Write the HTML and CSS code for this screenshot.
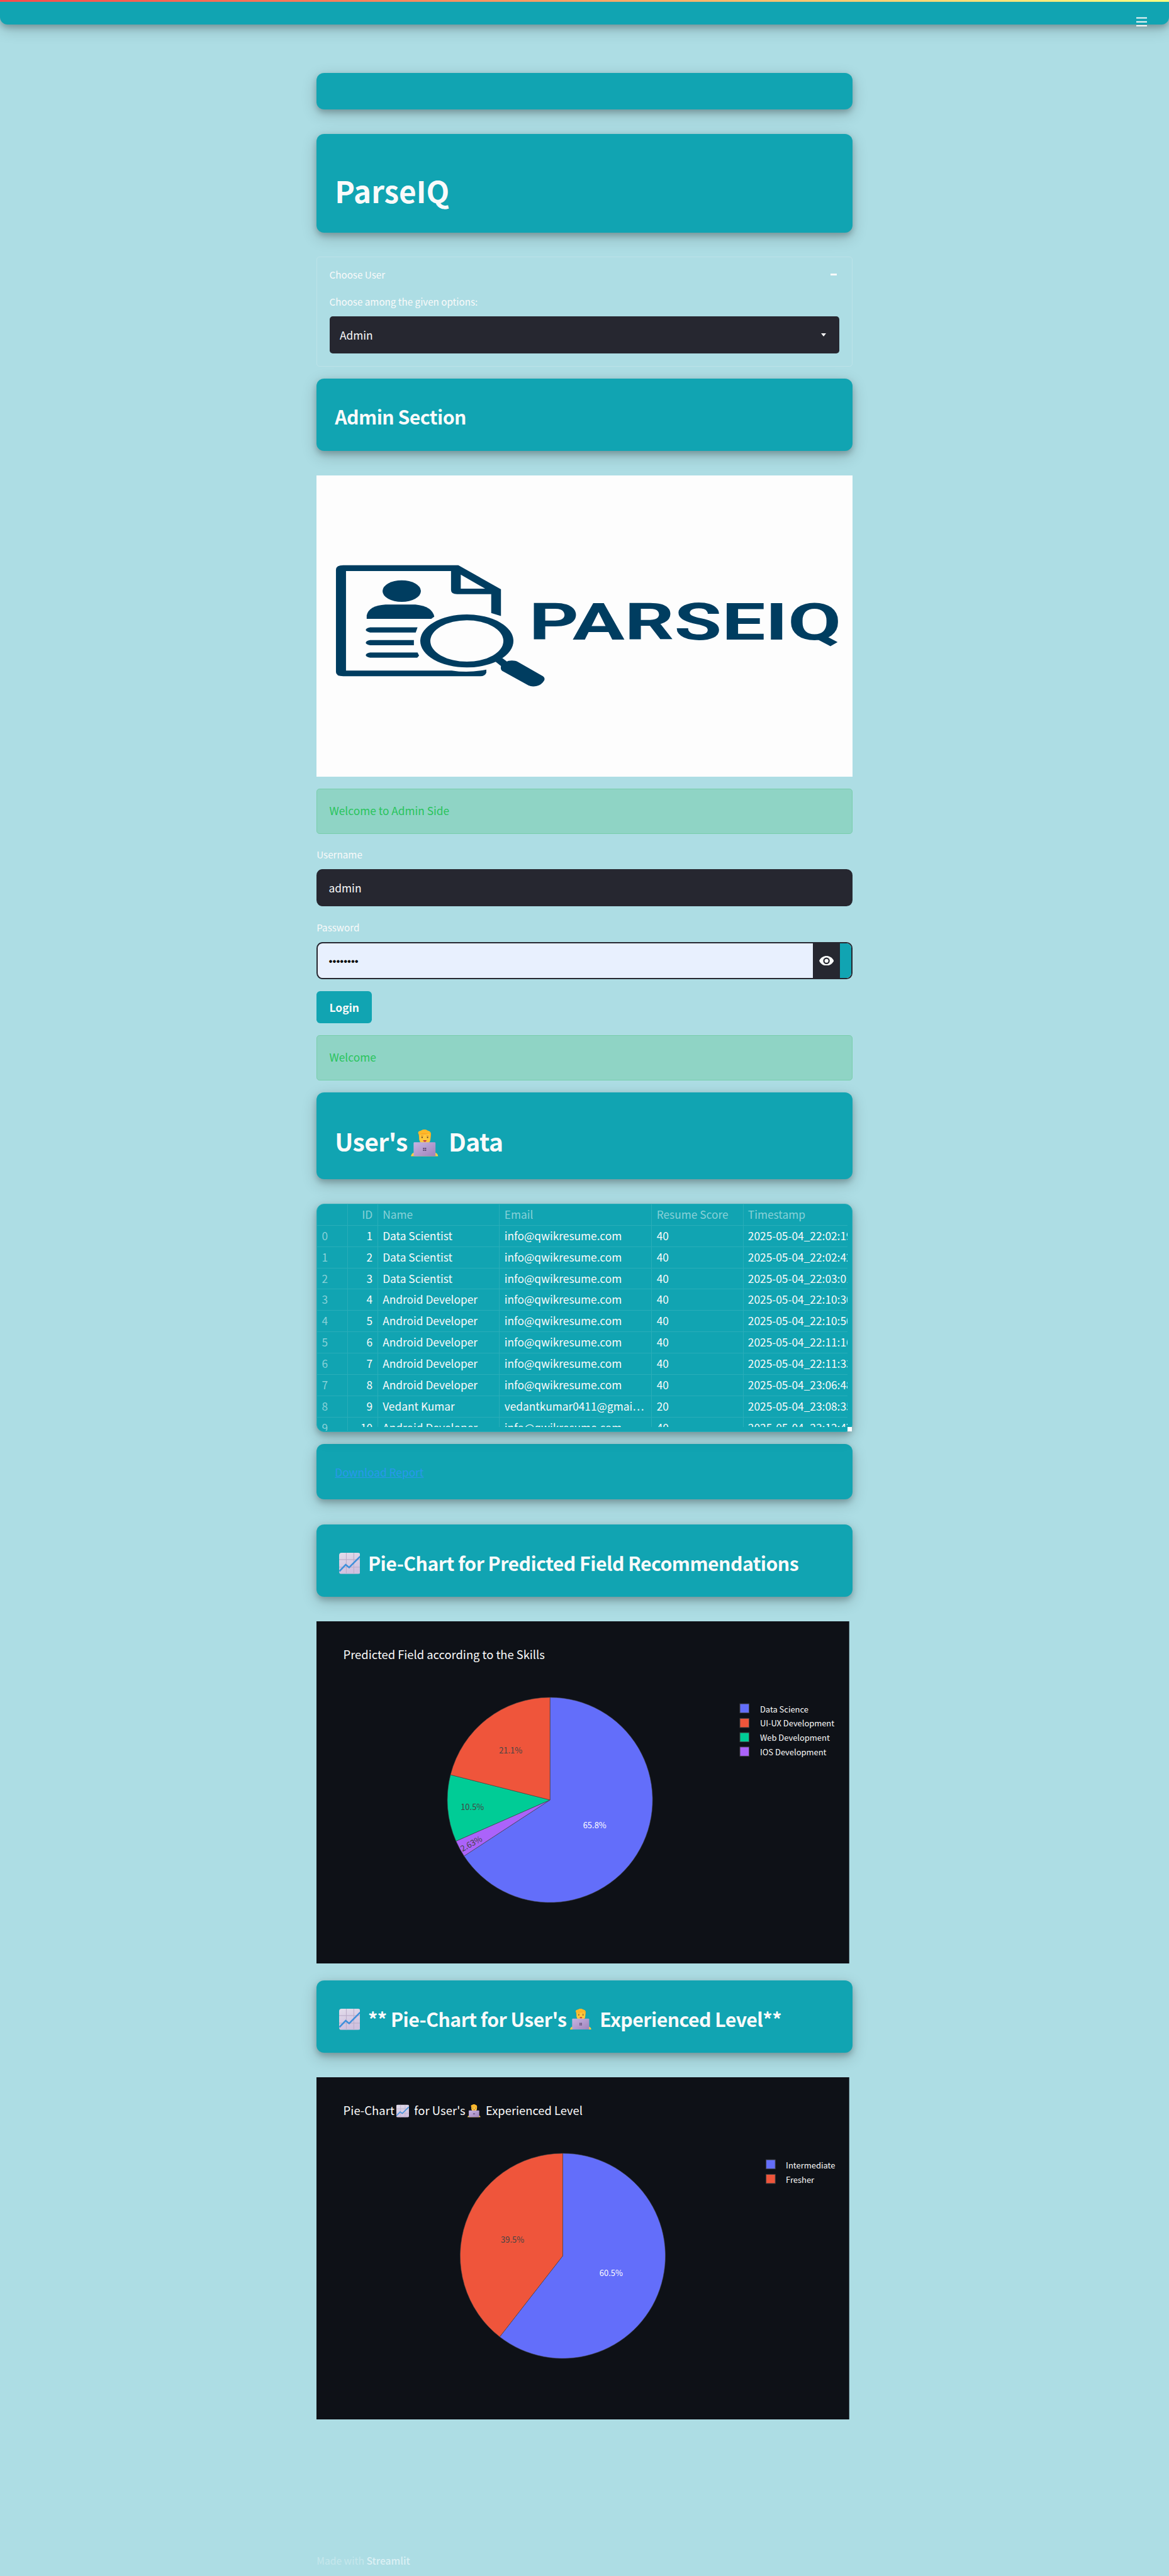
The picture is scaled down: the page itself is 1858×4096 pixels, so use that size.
FILE: index.html
```html
<!DOCTYPE html>
<html lang="en">
<head>
<meta charset="utf-8">
<title>ParseIQ</title>
<link rel="stylesheet" href="styles.css">
</head>
<body>
<svg class="defs" width="0" height="0">
  <defs>
    <linearGradient id="paper" x1="0" y1="0" x2="0.3" y2="1"><stop offset="0" stop-color="#e2dcea"/><stop offset="1" stop-color="#cfc0df"/></linearGradient>
    <linearGradient id="lid" x1="0" y1="0" x2="1" y2="1"><stop offset="0" stop-color="#c6b4e2"/><stop offset="1" stop-color="#a083bb"/></linearGradient>
    <symbol id="chart-up" viewBox="0 0 34 34">
      <rect width="34" height="34" rx="4" fill="url(#paper)"/>
      <path d="M11.500 0v34M23.500 0v34M0 11h34M0 23h34" stroke="#bdb0cb" stroke-width="1.200"/>
      <path d="M.5 29.500 10.500 19l5.500 4.500L33.500 6" fill="none" stroke="#3d8fdb" stroke-width="2.500"/>
    </symbol>
    <symbol id="technologist" viewBox="0 0 45 45">
      <path d="M0 44q1-5 5-6h35q4 1 5 6z" fill="#ffcf3f"/>
      <path d="M13 8Q11 3 17 2q6-4 11 0 6 1 5 8l-1 8H14z" fill="#f9a825"/>
      <path d="M14 8q8 1 17-1 1 3 1 9 0 8-9.500 8-8 0-8.500-8z" fill="#ffc83d"/>
      <path d="M13 8Q10 3 16 2q6-4 12 0 6 1 4 7-4-3-9-3-6 0-10 2z" fill="#fdb92a"/>
      <path d="M16.500 10.500h4M25.500 10.500h4" stroke="#d98b1f" stroke-width="1"/>
      <circle cx="18.500" cy="13" r="1.200" fill="#5b3a2e"/><circle cx="27.500" cy="13" r="1.200" fill="#5b3a2e"/>
      <path d="M20 17.500h6q-1 3-3 3t-3-3z" fill="#c43a4b"/>
      <rect x="4.500" y="21" width="36" height="23" rx="1.500" fill="url(#lid)"/>
      <path d="M20 30h2.200v2.200H20zm3 0h2.200v2.200H23zm-3 3h2.200v2.200H20zm3 0h2.200v2.200H23z" fill="#5c4a74"/>
    </symbol>
  </defs>
</svg>

<header class="topbar">
  <svg class="menu" viewBox="0 0 18 16"><path d="M0 1.500h18M0 8h18M0 14.500h18" stroke="#fafafa" stroke-width="2"/></svg>
</header>

<main class="column">
  <div class="card blank"></div>
  <div class="card brand"><h1>ParseIQ</h1></div>

  <section class="expander">
    <div class="summary"><span>Choose User</span><i class="minus"></i></div>
    <label class="label">Choose among the given options:</label>
    <div class="select"><span>Admin</span><i class="caret"></i></div>
  </section>

  <div class="card section"><h3>Admin Section</h3></div>

  <svg class="logo" viewBox="0 0 880 495">
    <path d="M44 147.500H233L303 187V231L287 226V195H231q-10 0-10-7V157H48.500V320.500H222q28 4.500 57-1.500v5q-2 6-10 6H44q-12 0-12-7V155q0-7.500 12-7.500zM237 163V186H277z" fill="#003d60" fill-rule="evenodd"/>
    <g fill="#003d60">
      <ellipse cx="140" cy="190" rx="31.500" ry="17.800"/>
      <path d="M82.500 235.500V230q3-16 31-18h49q28 3 31 20l-5 3.500z"/>
      <path d="M88 249.500h78l-3 8.500H88q-7-1.500-7-4.200t7-4.300zM88 270.500h72v8.500H88q-7-1.500-7-4.200t7-4.300zM88 291h78l2.500 5-3 3.500H88q-7-1.500-7-4.200t7-4.300z"/>
      <path d="M294 306l11-6 8 6q1-2 8-2 6 0 9 2l42 24q4 3 2 7-4 7-12 9-8 2-14-1l-43-24q-3-2-2-8z"/>
    </g>
    <ellipse cx="247" cy="272" rx="68" ry="38.800" fill="#fdfdfd"/>
    <path fill="#003d60" fill-rule="evenodd" d="M170.500 272a76.500 43.500 0 1 0 153 0a76.500 43.500 0 1 0-153 0zM187 272a60 34 0 1 1 120 0a60 34 0 1 1-120 0z"/>
    <text class="wordmark" x="349" y="269.300" textLength="513" lengthAdjust="spacingAndGlyphs">PARSEIQ</text>
  </svg>

  <div class="alert">Welcome to Admin Side</div>

  <div class="field"><label class="label">Username</label><div class="input">admin</div></div>
  <div class="field"><label class="label">Password</label>
    <div class="input password"><span class="dots">••••••••</span>
      <span class="reveal"><svg viewBox="0 0 24 16"><path d="M12 0C6.500 0 2 3.300 0 8c2 4.700 6.500 8 12 8s10-3.300 12-8c-2-4.700-6.500-8-12-8z" fill="#fafafa"/><circle cx="12" cy="8" r="4.300" fill="none" stroke="#262730" stroke-width="2.200"/></svg></span>
      <span class="edge"></span></div>
  </div>
  <button class="login">Login</button>

  <div class="alert">Welcome</div>

  <div class="card users"><h2>User's<svg class="emoji-l"><use href="#technologist"/></svg> Data</h2></div>

  <div class="table">
    <div class="grid">
      <div class="row head"><span></span><span>ID</span><span>Name</span><span>Email</span><span>Resume Score</span><span>Timestamp</span></div>
      <div class="row"><span>0</span><span>1</span><span>Data Scientist</span><span>info@qwikresume.com</span><span>40</span><span>2025-05-04_22:02:19</span></div>
      <div class="row"><span>1</span><span>2</span><span>Data Scientist</span><span>info@qwikresume.com</span><span>40</span><span>2025-05-04_22:02:42</span></div>
      <div class="row"><span>2</span><span>3</span><span>Data Scientist</span><span>info@qwikresume.com</span><span>40</span><span>2025-05-04_22:03:01</span></div>
      <div class="row"><span>3</span><span>4</span><span>Android Developer</span><span>info@qwikresume.com</span><span>40</span><span>2025-05-04_22:10:30</span></div>
      <div class="row"><span>4</span><span>5</span><span>Android Developer</span><span>info@qwikresume.com</span><span>40</span><span>2025-05-04_22:10:50</span></div>
      <div class="row"><span>5</span><span>6</span><span>Android Developer</span><span>info@qwikresume.com</span><span>40</span><span>2025-05-04_22:11:16</span></div>
      <div class="row"><span>6</span><span>7</span><span>Android Developer</span><span>info@qwikresume.com</span><span>40</span><span>2025-05-04_22:11:33</span></div>
      <div class="row"><span>7</span><span>8</span><span>Android Developer</span><span>info@qwikresume.com</span><span>40</span><span>2025-05-04_23:06:48</span></div>
      <div class="row"><span>8</span><span>9</span><span>Vedant Kumar</span><span>vedantkumar0411@gmai…</span><span>20</span><span>2025-05-04_23:08:35</span></div>
      <div class="row"><span>9</span><span>10</span><span>Android Developer</span><span>info@qwikresume.com</span><span>40</span><span>2025-05-04_23:12:47</span></div>
    </div>
    <i class="corner"></i>
  </div>

  <div class="card report"><a class="link">Download Report</a></div>

  <div class="card chart-title"><h3><svg class="emoji-m"><use href="#chart-up"/></svg> Pie-Chart for Predicted Field Recommendations</h3></div>

  <svg class="chart" viewBox="0 0 875 562.500">
    <rect width="875" height="562.500" fill="#0e1117"/>
    <text class="ct" x="44" y="62" textLength="331">Predicted Field according to the Skills</text>
    <g transform="translate(383.500 293.500)" stroke="#444" stroke-width=".6">
      <path d="M0 0V-168.500A168.500 168.500 0 1 1-141.060 92.160z" fill="#636efa"/>
      <path d="M0 0-141.060 92.160A168.500 168.500 0 0 1-154.300 67.700z" fill="#ab63fa"/>
      <path d="M0 0-154.300 67.700A168.500 168.500 0 0 1-163.350-41.340z" fill="#00cc96"/>
      <path d="M0 0-163.350-41.340A168.500 168.500 0 0 1 0-168.500z" fill="#ef553b"/>
    </g>
    <g class="pl">
      <text x="457" y="339.500" fill="#fff">65.8%</text>
      <text x="319" y="217.500">21.1%</text>
      <text x="256" y="309.500">10.5%</text>
      <text transform="translate(256.500 369.500) rotate(-28.400)">2.63%</text>
    </g>
    <g stroke="#444" stroke-width="1">
      <rect x="695.500" y="135.500" width="15" height="15" fill="#636efa"/>
      <rect x="695.500" y="159.500" width="15" height="15" fill="#ef553b"/>
      <rect x="695.500" y="183" width="15" height="15" fill="#00cc96"/>
      <rect x="695.500" y="206.500" width="15" height="15" fill="#ab63fa"/>
    </g>
    <g class="lg">
      <text x="728.500" y="149.500" textLength="79.500">Data Science</text>
      <text x="728.500" y="173" textLength="122">UI-UX Development</text>
      <text x="728.500" y="196.500" textLength="114.500">Web Development</text>
      <text x="728.500" y="220" textLength="109">IOS Development</text>
    </g>
  </svg>

  <div class="card chart-title second-title"><h3><svg class="emoji-m"><use href="#chart-up"/></svg> ** Pie-Chart for User's<svg class="emoji-m tight"><use href="#technologist"/></svg> Experienced Level**</h3></div>

  <svg class="chart" viewBox="0 0 875 562.500">
    <rect width="875" height="562.500" fill="#0e1117"/>
    <g class="ct">
      <text x="44" y="62.500" textLength="84">Pie-Chart</text>
      <text x="160.500" y="62.500" textLength="84">for User's</text>
      <text x="278" y="62.500" textLength="159">Experienced Level</text>
    </g>
    <use href="#chart-up" x="131" y="45" width="21" height="21"/>
    <use href="#technologist" x="248" y="44.500" width="21.500" height="21.500"/>
    <g transform="translate(404.500 293.500)" stroke="#444" stroke-width=".6">
      <path d="M0 0V-168.500A168.500 168.500 0 1 1-103.500 132.960z" fill="#636efa"/>
      <path d="M0 0-103.500 132.960A168.500 168.500 0 0 1 0-168.500z" fill="#ef553b"/>
    </g>
    <g class="pl">
      <text x="484" y="327" fill="#fff">60.5%</text>
      <text x="322" y="272">39.5%</text>
    </g>
    <g stroke="#444" stroke-width="1">
      <rect x="738.500" y="135.500" width="15" height="15" fill="#636efa"/>
      <rect x="738.500" y="159.500" width="15" height="15" fill="#ef553b"/>
    </g>
    <g class="lg">
      <text x="771" y="149.500" textLength="81">Intermediate</text>
      <text x="771" y="173.500" textLength="46.500">Fresher</text>
    </g>
  </svg>

  <footer class="footer">Made with <b>Streamlit</b></footer>
</main>
</body>
</html>
```
FILE: styles.css
```css
/* 1rem is ten layout units; the page is 192rem wide */
html { font-size: 9.6771px; }
* { box-sizing: border-box; }
body {
  margin: 0;
  height: 423.2rem;
  overflow: hidden;
  background: #addde4;
  color: #fafafa;
  font-family: "Noto Sans CJK SC", "Noto Sans", sans-serif;
  font-size: 1.79rem;
  line-height: 3rem;
  white-space: nowrap;
}
.defs { position: absolute; }
h1, h2, h3 { margin: 0; font-weight: 600; }

.topbar {
  height: 4rem;
  background: linear-gradient(90deg, #ff4b4b, #fffd80) top / 100% .3rem no-repeat, #11a4b2;
  border-radius: 0 0 1.25rem 1.25rem;
  box-shadow: 0 .5rem 1rem rgba(0,0,0,.2), 0 .75rem 2.5rem rgba(0,0,0,.19);
  display: flex;
  justify-content: flex-end;
  padding: 2.8rem 3.6rem 0 0;
}
.menu { width: 1.8rem; height: 1.6rem; flex: none; }

.column {
  width: 88rem;
  margin: 8rem auto 0;
  display: flex;
  flex-direction: column;
}
.card {
  background: #11a4b2;
  border-radius: 1.25rem;
  box-shadow: 0 .5rem 1rem rgba(0,0,0,.2), 0 .75rem 2.5rem rgba(0,0,0,.19);
  padding-left: 3rem;
  display: flex;
  align-items: center;
}
.blank { height: 6rem; }
.brand { height: 16.2rem; margin-top: 4rem; padding-top: 2.4rem; }
h1 { font-size: 4.92rem; font-weight: 700; line-height: 6rem; }
h2 { font-size: 4.03rem; line-height: 5rem; letter-spacing: -.06rem; }
h3 { font-size: 3.13rem; line-height: 4rem; letter-spacing: -.057rem; }

.expander {
  height: 18rem;
  margin: 4rem 0 2rem;
  border: .1rem solid rgba(250,250,250,.2);
  border-radius: .5rem;
  padding: 1.3rem 2rem 0;
}
.summary { display: flex; justify-content: space-between; align-items: center; font-size: 1.57rem; padding-right: .5rem; }
.minus { width: 1rem; height: .25rem; background: #fafafa; }
.label { display: block; font-size: 1.57rem; line-height: 3rem; }
.expander .label { margin-top: 1.4rem; }
.select {
  margin-top: 1rem;
  height: 6.1rem;
  background: #262730;
  border-radius: .5rem;
  padding: 0 2.2rem 0 1.7rem;
  display: flex;
  justify-content: space-between;
  align-items: center;
}
.caret { border: .5rem solid transparent; border-top: .6rem solid #fafafa; border-bottom: 0; }

.section { height: 11.9rem; padding-top: .7rem; }
.logo { margin-top: 4rem; width: 88rem; height: 49.5rem; background: #fdfdfd; }
.wordmark { font: 700 84px "Roboto", sans-serif; fill: #003d60; }

.alert {
  height: 7.4rem;
  margin-top: 2rem;
  background: #8fd4c5;
  border: .1rem solid #78cdaa;
  border-radius: .5rem;
  color: #29c45c;
  padding: 2rem;
}
.field { padding-top: 1.9rem; }
.field .label { margin-bottom: .9rem; }
.field + .field { padding-top: 2rem; }
.input {
  height: 6.1rem;
  background: #262730;
  border: 2px solid #262730;
  border-radius: 1rem;
  padding-left: 1.8rem;
  display: flex;
  align-items: center;
  overflow: hidden;
}
.password { background: #e8f0fe; color: #000; padding: 0; align-items: stretch; }
.dots { flex: 1; padding: 1.5rem 0 0 1.8rem; font-family: "Liberation Sans", sans-serif; font-size: 1.74rem; }
.reveal { width: 4.5rem; background: #262730; display: flex; align-items: center; justify-content: center; }
.reveal svg { width: 2.4rem; height: 1.6rem; }
.edge { width: 1.8rem; background: #11a4b2; }
.login {
  margin-top: 2rem;
  width: 9.1rem;
  height: 5.2rem;
  border: 0;
  border-radius: .6rem;
  background: #11a4b2;
  color: #fafafa;
  font: 600 1.79rem "Noto Sans CJK SC", sans-serif;
}
.users { height: 14.3rem; margin-top: 2rem; padding-top: 1.8rem; }
.emoji-l { width: 4.5rem; height: 4.5rem; margin: 0 .8rem 0 .6rem; vertical-align: -.8rem; }
.emoji-m { width: 3.5rem; height: 3.5rem; margin: 0 .65rem; vertical-align: -.5rem; }
.emoji-m.tight { margin: 0 .7rem 0 .6rem; }

.table {
  position: relative;
  height: 37.5rem;
  margin-top: 4rem;
  background: #11a4b2;
  border: .1rem solid #29adb9;
  border-radius: 1.25rem;
  box-shadow: 0 .5rem 1rem rgba(0,0,0,.2), 0 .75rem 2.5rem rgba(0,0,0,.19);
}
.grid { width: 87.1rem; height: 37.2rem; overflow: hidden; }
.row { display: grid; grid-template-columns: 5rem 5rem 20rem 25rem 15rem 17.1rem; }
.row span { height: 3.5rem; line-height: 3.4rem; padding-left: .75rem; border: 0 solid #29adb9; border-width: 0 .1rem .1rem 0; overflow: hidden; }
.row span:first-child { color: #88d1d8; }
.row span:nth-child(2) { text-align: right; padding: 0 .8rem 0 0; }
.row span:last-child { border-right: 0; }
.row:last-child span { border-bottom: 0; }
.row:last-child span:not(:first-child) { height: 1.6rem; }
.head { color: #88d1d8; }
.corner { position: absolute; right: 0; bottom: 0; width: .7rem; height: .7rem; background: #fff; }

.report { height: 9.1rem; margin-top: 2rem; }
.link { color: #2997ec; text-decoration: underline; }
.chart-title { height: 11.9rem; margin-top: 4.1rem; padding-top: .8rem; }
.second-title { margin-top: 2.8rem; }
.chart { width: 87.5rem; height: 56.25rem; margin-top: 4rem; }
.chart text { font-family: "Noto Sans CJK SC", sans-serif; }
.ct { font-size: 19px; fill: #fafafa; }
.pl { font-size: 13.4px; text-anchor: middle; fill: #444; }
.lg { font-size: 13.4px; fill: #fafafa; }
.footer { margin-top: 21.7rem; font-size: 1.62rem; color: #c6e7ec; }
.footer b { font-weight: 500; color: #dcf0f4; }
```
